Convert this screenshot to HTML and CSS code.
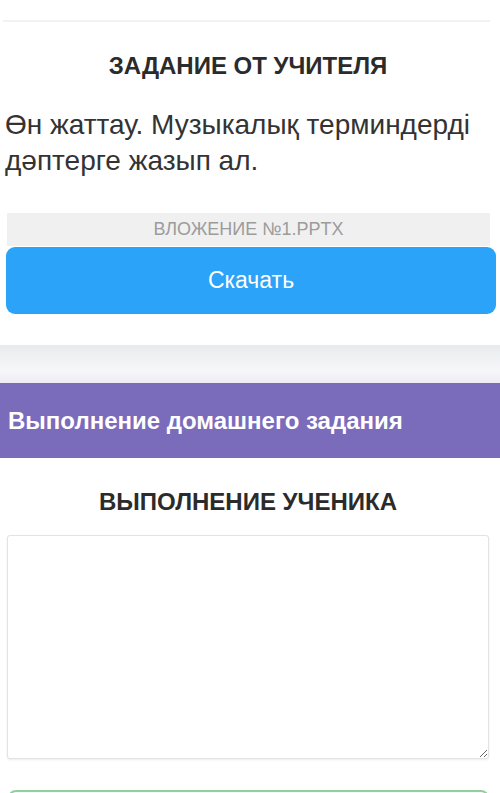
FILE: index.html
```html
<!DOCTYPE html>
<html lang="ru">
<head>
    <meta charset="UTF-8">
    <meta name="viewport" content="width=device-width, initial-scale=1.0">
    <title>Домашнее задание</title>
    <link rel="stylesheet" href="styles.css">
</head>
<body>
    <div class="card">
        <hr class="divider">
        <h2 class="title">ЗАДАНИЕ ОТ УЧИТЕЛЯ</h2>
        <p class="task-text">Өн жаттау. Музыкалық терминдерді дәптерге жазып ал.</p>
        <div class="attachment">ВЛОЖЕНИЕ №1.PPTX</div>
        <a class="btn-download" href="#">Скачать</a>
    </div>

    <div class="band"></div>

    <div class="section-head">Выполнение домашнего задания</div>

    <div class="card student">
        <h2 class="title">ВЫПОЛНЕНИЕ УЧЕНИКА</h2>
        <textarea class="answer"></textarea>
        <div class="btn-send"></div>
    </div>
</body>
</html>
```

FILE: styles.css
```css
body { margin: 0; background: #fff; font-family: "Liberation Sans", Arial, sans-serif; color: #333; height: 793px; overflow: hidden; }
.card { padding: 20px 10px 0 6px; background: #fff; }
.divider { border: 0; height: 2px; background: #f2f2f2; margin: 0 0 0 -3px; }
.title { margin: 30px 0 0; font-size: 24px; font-weight: bold; text-align: center; color: #2b2b2b; }
.task-text { margin: 27px 0 0 -1px; font-size: 28px; line-height: 36px; color: #333; }
.attachment { margin: 34px 0 0 1px; height: 33px; line-height: 33px; background: #f0f0f0; color: #9c9c9c; font-size: 18px; text-align: center; }
.btn-download { display: block; margin: 1px -6px 0 0; height: 67px; line-height: 67px; background: #2aa3f8; color: #fff; font-size: 23px; text-align: center; text-decoration: none; border-radius: 9px; }
.card:first-child { padding-bottom: 31px; }
.band { height: 38px; background: linear-gradient(#e8ebee, #f6f7f9 70%, #eeeaf6); }
.section-head { height: 75px; line-height: 75px; padding-left: 8px; background: #7a6bbb; color: #fff; font-size: 24px; font-weight: bold; box-shadow: 0 4px 6px rgba(0,0,0,0.06); }
.student { padding: 0 11px 0 7px; height: 335px; overflow: hidden; }
.student .title { margin-top: 30px; }
.answer { display: block; width: 100%; box-sizing: border-box; height: 224px; margin-top: 19px; border: 1px solid #e3e3e3; border-radius: 3px; box-shadow: 0 1px 2px rgba(0,0,0,0.08); font-family: inherit; }
.btn-send { margin: 31px 0 0 1px; height: 40px; border: 2px solid #8fd19e; border-radius: 8px; background: #f3fbf5; }
```
